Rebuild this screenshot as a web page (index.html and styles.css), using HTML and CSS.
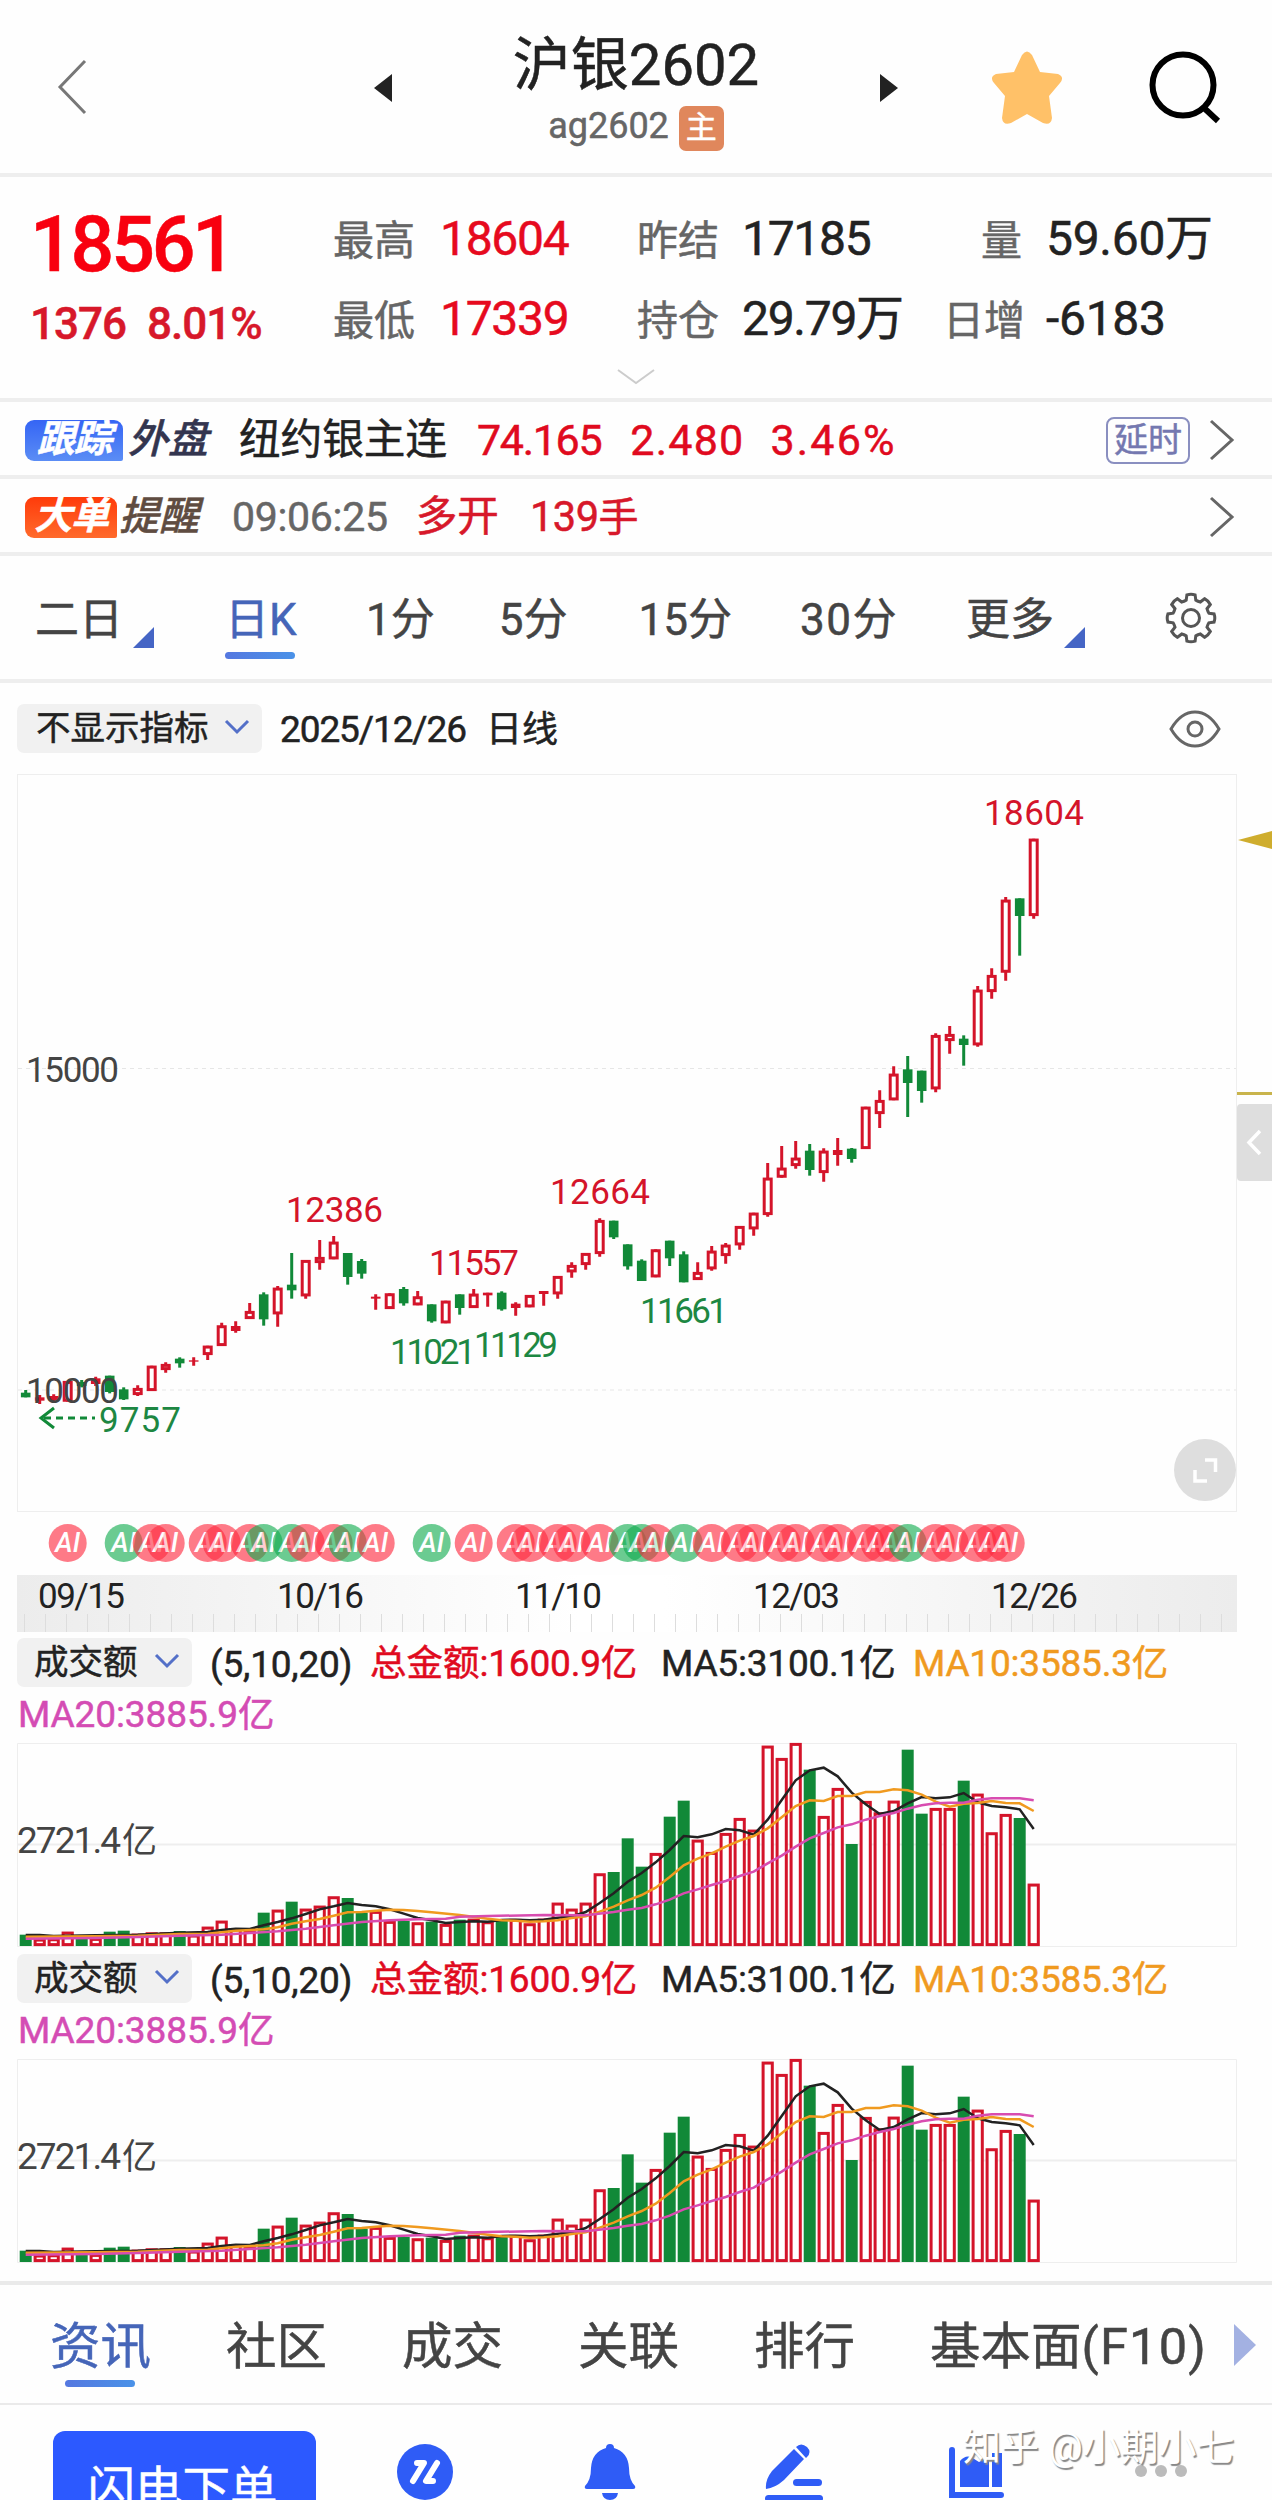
FILE: index.html
```html
<!DOCTYPE html>
<html lang="zh-CN">
<head>
    <meta charset="UTF-8">
    <title>沪银2602</title>
    <link rel="stylesheet" href="styles.css">
</head>
<body>
    <header class="topbar">
        <svg class="back" width="30" height="56" viewBox="0 0 30 56"><path d="M28 2 L3 28 L28 54"/></svg>
        <svg class="arrow prev" width="18" height="28" viewBox="0 0 18 28"><path d="M18 0 V28 L0 14 Z"/></svg>
        <div class="title">
            <h1>沪银2602</h1>
            <div class="code">ag2602<span class="main-tag">主</span></div>
        </div>
        <svg class="arrow next" width="18" height="28" viewBox="0 0 18 28"><path d="M0 0 V28 L18 14 Z"/></svg>
        <svg class="star" width="72" height="74" viewBox="0 0 72 74"><path d="M31 4 Q36 -3 41 4 L49 21 L67 23 Q74 26 69 32 L58 45 L61 67 Q60 75 52 72 L36 63 L20 72 Q12 75 11 67 L14 45 L3 32 Q-2 26 5 23 L23 21 Z"/></svg>
        <svg class="search" width="74" height="74" viewBox="0 0 74 74"><circle cx="34" cy="34" r="30.5"/><path d="M54 56 L69 70"/></svg>
    </header>

    <section class="quote">
        <div class="price">18561</div>
        <div class="label">最高</div><div class="value up">18604</div>
        <div class="label">昨结</div><div class="value">17185</div>
        <div class="label right">量</div><div class="value">59.60<span class="cn">万</span></div>
        <div class="change"><span>1376</span><span>8.01%</span></div>
        <div class="label">最低</div><div class="value up">17339</div>
        <div class="label">持仓</div><div class="value">29.79<span class="cn">万</span></div>
        <div class="label right">日增</div><div class="value">-6183</div>
        <svg class="more" width="38" height="16" viewBox="0 0 38 16"><path d="M1 1 L19 14 L37 1"/></svg>
    </section>

    <section class="strip">
        <span class="badge blue">跟踪</span><span class="badge-text dark">外盘</span>
        <span class="name">纽约银主连</span>
        <span class="nums"><b>74.165</b><b class="diff">2.480</b><b class="pct">3.46%</b></span>
        <span class="delay">延时</span>
        <svg class="go" width="26" height="42" viewBox="0 0 26 42"><path d="M2 2 L23 21 L2 40"/></svg>
    </section>
    <section class="strip second">
        <span class="badge orange">大单</span><span class="badge-text brown">提醒</span>
        <span class="time">09:06:25</span>
        <span class="deal">多开</span>
        <span class="deal hands">139<span class="cn">手</span></span>
        <svg class="go" width="26" height="42" viewBox="0 0 26 42"><path d="M2 2 L23 21 L2 40"/></svg>
    </section>

    <nav class="periods">
        <span class="period corner">二日</span>
        <span class="period active">日K</span>
        <span class="period p1">1分</span>
        <span class="period p5">5分</span>
        <span class="period p15">15分</span>
        <span class="period p30">30分</span>
        <span class="period corner pmore">更多</span>
        <svg class="gear" width="52" height="52" viewBox="-26 -26 52 52"><path id="gear"/><circle r="8.5"/></svg>
    </nav>

    <section class="chart-head">
        <span class="select wide">不显示指标<svg width="26" height="16" viewBox="0 0 26 16"><path d="M2 2 L13 13 L24 2"/></svg></span>
        <span class="date">2025/12/26</span><span class="kline">日线</span>
        <svg class="eye" width="52" height="38" viewBox="0 0 52 38"><path d="M2 19 Q12 2 26 2 T50 19 Q40 36 26 36 T2 19 Z"/><circle cx="26" cy="19" r="7"/></svg>
    </section>

    <svg class="kchart" width="1272" height="860" viewBox="0 774 1272 860">
        <defs>
            <linearGradient id="axis">
                <stop offset="0" stop-color="#ececec"/><stop offset=".46" stop-color="#fff"/>
                <stop offset=".53" stop-color="#fff"/><stop offset="1" stop-color="#ececec"/>
            </linearGradient>
        </defs>
        <rect class="frame" x="17.5" y="774.5" width="1219" height="737"/>
        <path class="grid" d="M18 1068.5 H1236 M18 1390 H1236"/>
        <g id="candles"></g>
        <g class="tag up">
            <text x="984" y="825" textLength="100">18604</text>
            <text x="286" y="1222" textLength="97">12386</text>
            <text x="550" y="1204" textLength="100">12664</text>
            <text x="429" y="1275" textLength="90">11557</text>
        </g>
        <g class="tag down">
            <text x="390" y="1363.5" textLength="86">11021</text>
            <text x="474" y="1357" textLength="84">11129</text>
            <text x="640" y="1323" textLength="88">11661</text>
            <text x="99" y="1432" textLength="82">9757</text>
        </g>
        <g class="tag scale">
            <text x="26" y="1082" textLength="93">15000</text>
            <text x="26" y="1403" textLength="93">10000</text>
        </g>
        <path class="low-arrow" d="M54 1408 L41 1418 L54 1428"/>
        <path class="low-arrow" stroke-dasharray="7 5" d="M44 1418 H95"/>
        <circle cx="1205" cy="1470" r="31" fill="#dedede"/>
        <path class="white-line" d="M1205 1460 H1215.500 V1472 M1195 1470 V1481 H1207"/>
        <path d="M1238 840 L1272 831 V849 Z" fill="#cfad2e"/>
        <rect x="1237" y="1092" width="35" height="3" fill="#c9b44c"/>
        <rect x="1237" y="1104" width="40" height="77" rx="4" fill="#dedede"/>
        <path class="white-line" d="M1260 1131 L1249 1142.500 L1260 1154"/>
        <g id="ai"></g>
        <rect x="17" y="1575" width="1220" height="57" fill="url(#axis)"/>
        <path id="ticks" class="ticks"/>
        <g class="dates">
            <text x="38" y="1608" textLength="87">09/15</text>
            <text x="277" y="1608" textLength="87">10/16</text>
            <text x="515" y="1608" textLength="87">11/10</text>
            <text x="753" y="1608" textLength="87">12/03</text>
            <text x="991" y="1608" textLength="87">12/26</text>
        </g>
    </svg>

    <section class="volume">
        <div class="vol-head">
            <span class="select">成交额<svg width="26" height="16" viewBox="0 0 26 16"><path d="M2 2 L13 13 L24 2"/></svg></span>
            <span class="args">(5,10,20)</span>
            <span class="total"><i>总金额</i>:1600.9<i>亿</i></span>
            <span class="ma5">MA5:3100.1<i>亿</i></span>
            <span class="ma10">MA10:3585.3<i>亿</i></span>
        </div>
        <div class="ma20">MA20:3885.9<i>亿</i></div>
        <svg class="vchart" width="1272" height="208" viewBox="0 -1 1272 208"></svg>
    </section>
    <section class="volume">
        <div class="vol-head">
            <span class="select">成交额<svg width="26" height="16" viewBox="0 0 26 16"><path d="M2 2 L13 13 L24 2"/></svg></span>
            <span class="args">(5,10,20)</span>
            <span class="total"><i>总金额</i>:1600.9<i>亿</i></span>
            <span class="ma5">MA5:3100.1<i>亿</i></span>
            <span class="ma10">MA10:3585.3<i>亿</i></span>
        </div>
        <div class="ma20">MA20:3885.9<i>亿</i></div>
        <svg class="vchart" width="1272" height="208" viewBox="0 -1 1272 208"></svg>
    </section>

    <nav class="tabs">
        <span class="tab active">资讯</span>
        <span class="tab">社区</span>
        <span class="tab">成交</span>
        <span class="tab">关联</span>
        <span class="tab">排行</span>
        <span class="tab">基本面<span class="f10">(F10)</span></span>
        <svg class="tab-more" width="22" height="42" viewBox="0 0 22 42"><path d="M0 0 L22 21 L0 42 Z"/></svg>
    </nav>

    <footer class="bottombar">
        <div class="order">闪电下单</div>
        <svg class="icon i1" width="56" height="56" viewBox="0 0 56 56"><circle cx="28" cy="28" r="28"/><path class="cut" d="M20 19 H27 L16 37 M40 19 L29 37 H36"/></svg>
        <svg class="icon i2" width="52" height="60" viewBox="0 0 52 60"><path d="M26 0 Q30 0 30 4 Q44 8 45 24 Q45 36 51 42 Q52 45 49 45 H3 Q0 45 1 42 Q7 36 7 24 Q8 8 22 4 Q22 0 26 0 Z M18 49 H34 Q33 56 26 56 Q19 56 18 49 Z"/></svg>
        <svg class="icon i3" width="58" height="60" viewBox="0 0 58 60"><path d="M1 45 Q0 36 7 27 L29 5 L39 15 L19 36 Q10 44 1 45 Z M31 3 Q36 -2 42 3 Q47 8 42 13 L41 14 Z"/><rect x="28" y="35" width="29" height="7" rx="3.500"/><rect x="0" y="51" width="58" height="7" rx="3.500"/></svg>
        <svg class="icon i4" width="56" height="54" viewBox="0 0 56 54"><path d="M3 3 V48 H52" class="line"/><path d="M11 14 Q16 8 22 10 L30 15 L40 10 V40 H11 Z M43 6 H53 V40 H43 Z"/></svg>
        <svg class="dots" width="52" height="12" viewBox="0 0 52 12"><circle cx="6" cy="6" r="6"/><circle cx="26" cy="6" r="6"/><circle cx="46" cy="6" r="6"/></svg>
        <div class="watermark">知乎 @小期小七</div>
    </footer>

    <script src="chart.js"></script>
</body>
</html>
```
FILE: chart.js
```js
const STEP = 14;
const X0 = 25.7;
const RED = "#d4142a";
const GREEN = "#118938";
const cx = i => X0 + i * STEP;

// [base, rows], row: up/down, wick top, body top, body bottom, wick bottom
const periods = [
    [3540, [
        "g 630 638 652 652", "r 645 652 662 672", "r 643 648 660 664", "r 603 603 665 665",
        "g 600 606 618 622", "r 590 595 612 618", "g 587 587 636 640", "g 622 628 658 660",
        "r 616 624 645 648", "r 557 557 633 633", "r 547 552 570 578", "g 532 536 550 563",
        "r 532 541 545 557", "r 497 497 525 540", "r 428 436 498 498", "r 424 438 453 458",
        "r 369 393 417 417", "g 337 343 418 437", "r 318 323 403 440", "g 219 314 331 356",
        "r 240 240 349 356", "r 180 231 249 269", "r 168 185 238 238", "g 219 219 291 314",
        "g 237 243 281 296", "r 343 350 356 389", "r 340 340 387 387", "g 321 327 370 377",
        "r 333 349 376 376", "g 373 373 424 428", "r 362 362 430 430", "g 343 343 384 404",
        "r 327 341 384 384", "r 338 338 346 380", "g 334 338 388 392", "r 367 371 384 407",
        "r 345 345 382 382", "r 333 333 342 377", "r 288 288 343 356", "r 247 255 277 293",
        "r 219 219 255 269", "r 115 120 222 230", "g 122 122 172 177", "g 193 193 259 269"
    ]],
    [3120, [
        "g 658 662 723 723", "r 628 628 712 712", "g 602 602 655 678", "g 634 643 727 727",
        "r 667 696 720 720", "r 618 632 688 692", "r 609 614 648 671", "r 558 558 616 629",
        "r 518 518 568 587", "r 369 413 525 530", "r 318 383 413 413", "r 303 353 378 386",
        "g 312 332 390 407", "r 325 332 399 425", "r 294 330 345 377", "g 324 326 357 368",
        "r 200 200 327 327", "r 151 180 222 264", "r 79 101 181 181", "g 48 88 129 231",
        "g 92 92 153 188"
    ]],
    [2280, [
        "r 820 825 988 997", "r 798 822 843 881", "g 826 836 855 917", "r 678 689 856 860",
        "r 625 645 696 716", "r 411 419 638 662", "g 415 415 468 587", "r 236 236 468 476"
    ]]
];

const colors = [];
let out = "";
periods.forEach(([base, rows]) => rows.forEach(row => {
    const [color, ...v] = row.split(" ");
    const [wt, bt, bb, wb] = v.map(n => (base + Number(n)) / 3);
    const x = cx(colors.length);
    const h = bb - bt;
    colors.push(color);
    if (color === "g") {
        out += `<path stroke="${GREEN}" stroke-width="3" d="M${x} ${wt} V${wb}"/>`;
        out += `<rect x="${x - 4.8}" y="${bt}" width="9.6" height="${h}" fill="${GREEN}"/>`;
    } else {
        out += `<path stroke="${RED}" stroke-width="3" d="M${x} ${wt} V${bt + 1} M${x} ${bb - 1} V${wb}"/>`;
        if (h < 6) {
            out += `<rect x="${x - 4.8}" y="${bt}" width="9.6" height="${h}" fill="${RED}"/>`;
        } else {
            out += `<rect x="${x - 3.5}" y="${bt + 1.4}" width="7" height="${h - 2.8}" fill="#fff" stroke="${RED}" stroke-width="3"/>`;
        }
    }
}));
document.getElementById("candles").innerHTML = out;

const signals = "3 7g 9 10 13 14 16 17g 19g 20 22 23g 25 29g 32 35 36 38 39 41 43g 44g 45 47g 49 51 52 54 55 57 58 60 61 62 63g 65 66 68 69 70";
document.getElementById("ai").innerHTML = signals.split(" ").map(s => {
    const x = cx(parseInt(s));
    const fill = s.endsWith("g") ? "#12ac50" : "#ff2a3f";
    return `<g class="ai"><circle cx="${x}" cy="1543" r="19" fill="${fill}"/><text x="${x}" y="1552">AI</text></g>`;
}).join("");

let d = "";
for (let x = 24.5; x < 1237; x += 21) d += `M${x} 1614 V1632 `;
document.getElementById("ticks").setAttribute("d", d);

// turnover bars and averages
const tops = [616, 628, 627, 607, 625, 626, 607, 604, 613, 609, 609, 605, 616, 592, 574, 597, 603, 550, 541, 517,
    538, 529, 501, 506, 550, 545, 575, 575, 579, 577, 584, 571, 568, 576, 574, 569, 582, 568, 520, 538,
    520, 432, 428, 327, 412, 371, 262, 214, 331, 368, 311, 266, 301, 49, 86, 41, 121, 260, 176, 344,
    215, 249, 214, 61, 253, 236, 236, 154, 193, 309, 254, 266, 463];
const averages = [
    ["#222", "0 617 1 617 2 620 5 618 8 616 11 610 13 608 14 602 15 598 16 599 17 588 18 578 19 567 20 554 21 540 22 531 23 521 24 527 25 531 26 540 27 553 28 566 29 573 30 581 31 578 32 576 33 577 34 572 35 571 36 573 37 571 38 565 39 561 40 548 41 521 42 492 43 457 44 431 45 399 46 362 47 320 48 324 49 315 50 299 51 303 52 316 53 271 54 212 55 153 56 123 57 115 58 141 59 190 60 225 61 254 62 245 63 222 64 203 65 207 66 204 67 191 68 219 69 230 70 234 71 240 72 299"],
    ["#f09a1f", "0 622 5 621 8 619 11 614 13 613 15 604 17 600 18 594 19 583 20 576 21 569 22 559 23 549 24 548 25 544 26 541 27 542 28 545 29 549 31 557 33 568 34 573 35 574 36 577 37 576 38 573 39 566 40 561 41 547 42 532 43 513 44 497 45 475 46 443 47 408 48 388 49 372 50 352 51 334 52 320 53 297 54 264 55 230 56 213 57 215 58 200 59 200 60 188 61 188 62 180 63 183 64 196 65 217 66 232 67 223 68 221 69 215 70 221 71 222 72 245"],
    ["#d84cb0", "0 628 5 626 8 623 11 619 14 616 16 611 18 606 20 598 22 588 24 578 26 573 28 570 30 568 31 562 33 560 37 557 40 558 42 548 43 541 44 536 45 525 46 511 47 492 48 480 49 467 50 455 51 440 52 427 53 402 54 379 55 352 56 327 57 311 58 294 59 285 60 271 61 260 62 251 63 238 64 228 65 222 66 220 67 220 68 211 69 207 70 207 71 207 72 213"]
];
const vy = v => (v - 41) / 3;

let vol = '<path class="frame" d="M17.5 0.5 H1236.5 V203.5 H17.5 Z"/><path class="mid" d="M18 101.500 H1236"/>';
tops.forEach((v, i) => {
    const x = cx(i);
    const y = vy(v);
    vol += colors[i] === "g"
        ? `<rect x="${x - 6}" y="${y}" width="12" height="${203 - y}" fill="${GREEN}"/>`
        : `<rect x="${x - 4.6}" y="${y + 1.4}" width="9.2" height="${200.2 - y}" fill="#fff" stroke="${RED}" stroke-width="3"/>`;
});
averages.forEach(([color, list]) => {
    const n = list.split(" ").map(Number);
    let points = "";
    for (let i = 0; i < n.length; i += 2) points += `${cx(n[i])},${vy(n[i + 1])} `;
    vol += `<polyline points="${points}" fill="none" stroke="${color}" stroke-width="2.5"/>`;
});
vol += '<text class="amount" x="17" y="110" textLength="104">2721.4</text><text class="yi" x="122" y="110">亿</text>';
document.querySelectorAll(".vchart").forEach(svg => svg.innerHTML = vol);

// gear outline
let g = "";
for (let i = 0; i < 8; i++) {
    const at = (r, a) => {
        const t = (i * 45 + a) * Math.PI / 180;
        return `${(r * Math.cos(t)).toFixed(1)} ${(r * Math.sin(t)).toFixed(1)}`;
    };
    g += `${i ? "L" : "M"}${at(18.5, -15)} L${at(23.5, -10)} Q${at(24.5, 0)} ${at(23.5, 10)} L${at(18.5, 15)} Q${at(18, 22.5)} ${at(18.5, 30)} `;
}
document.getElementById("gear").setAttribute("d", g + "Z");
```
FILE: styles.css
```css
* {
    box-sizing: border-box;
}

body {
    margin: 0;
    width: 1272px;
    height: 2500px;
    overflow: hidden;
    background-color: #fefefe;
    color: #222;
    font-family: Roboto, "Noto Sans CJK SC", sans-serif;
    line-height: 1;
    -webkit-text-stroke: .5px;
}

svg {
    display: block;
    flex: none;
}

i {
    font-style: normal;
}

.up {
    color: #e60a1e;
}

/* top bar */
.topbar {
    display: flex;
    align-items: center;
    height: 177px;
    border-bottom: 4px solid #eee;
}

.back {
    margin-left: 57px;
    fill: none;
    stroke: #777;
    stroke-width: 3;
}

.arrow {
    margin-top: 3px;
    fill: #222;
}

.prev {
    margin-left: 287px;
}

.title {
    width: 488px;
    padding-top: 4px;
    text-align: center;
}

.title h1 {
    margin: 4px 0 0;
    font-size: 58px;
    font-weight: 400;
    line-height: 68px;
    white-space: nowrap;
}

.code {
    display: flex;
    justify-content: center;
    align-items: center;
    gap: 10px;
    height: 46px;
    margin-top: 5px;
    padding-bottom: 3px;
    font-size: 36px;
    color: #666;
}

.main-tag {
    width: 45px;
    height: 45px;
    margin-top: 5px;
    border-radius: 7px;
    background-color: #e0875c;
    color: #fff;
    font-size: 31px;
    line-height: 44px;
}

.star {
    margin: 3px 0 0 93px;
    fill: #ffc168;
}

.search {
    margin: 3px 0 0 86px;
    fill: none;
    stroke: #000;
    stroke-width: 6;
}

/* quote */
.quote {
    display: grid;
    grid-template-columns: 303px 107px 197px 105px 201px 79px 1fr;
    grid-template-rows: 80px 80px 36px;
    align-items: center;
    align-content: start;
    height: 225px;
    padding: 22px 0 0 30px;
    border-bottom: 4px solid #eee;
    white-space: nowrap;
}

.price {
    padding-top: 12px;
    font-size: 77px;
    font-weight: 500;
    letter-spacing: -3.2px;
    color: #f8000f;
}

.change {
    display: flex;
    gap: 21px;
    padding-top: 9px;
    font-size: 44px;
    font-weight: 500;
    letter-spacing: -1px;
    color: #d7182a;
}

.label {
    padding-top: 4px;
    font-size: 41px;
    color: #666;
}

.right {
    text-align: right;
}

.value {
    font-size: 48px;
    letter-spacing: -1.3px;
}

.quote .right + .value {
    padding-left: 24px;
    letter-spacing: -.3px;
}

.value .cn {
    font-size: 48px;
    letter-spacing: 0;
}

.more {
    grid-column: 1 / -1;
    margin-left: 587px;
    fill: none;
    stroke: #ccc;
    stroke-width: 2;
}

/* strips */
.strip {
    display: flex;
    align-items: center;
    height: 77px;
    padding: 3px 37px 0 25px;
    border-bottom: 4px solid #eee;
    font-size: 41.6px;
    white-space: nowrap;
}

.badge {
    width: 98px;
    height: 41px;
    border-radius: 9px 9px 2px 9px;
    color: #fff;
    font-size: 38px;
    font-weight: 700;
    font-style: italic;
    line-height: 39px;
    text-align: center;
    letter-spacing: -1px;
}

.blue {
    background: linear-gradient(#3565f5, #5b8df5);
}

.orange {
    width: 92px;
    background: linear-gradient(#ff3b0a, #ff6a2c);
}

.badge-text {
    width: 82px;
    margin-left: 5px;
    font-size: 40px;
    font-weight: 500;
    font-style: italic;
    color: #33354f;
}

.brown {
    margin-left: 2px;
    color: #5f4c41;
}

.name {
    margin-left: 29px;
}

.nums {
    display: flex;
    gap: 29px;
    margin-left: 30px;
    font-size: 43px;
    letter-spacing: -1.3px;
    color: #e00a1e;
}

.nums b {
    font-weight: 400;
}

.nums .diff {
    letter-spacing: 1.2px;
}

.nums .pct {
    margin-left: -3px;
    letter-spacing: 2.2px;
}

.delay {
    width: 84px;
    height: 47px;
    margin-left: auto;
    border: 2px solid #8a8fc0;
    border-radius: 8px;
    color: #7478b0;
    font-size: 34px;
    line-height: 43px;
    text-align: center;
}

.go {
    margin-left: auto;
    fill: none;
    stroke: #666;
    stroke-width: 3;
}

.delay + .go {
    margin-left: 19px;
}

.time {
    margin-left: 31px;
    font-size: 41px;
    letter-spacing: -.3px;
    color: #666;
}

.deal {
    margin-left: 28px;
    color: #d7182a;
}

.hands {
    margin-left: 31px;
    letter-spacing: -.5px;
}

.hands .cn {
    font-size: 40px;
}

/* periods */
.periods {
    display: flex;
    align-items: center;
    height: 127px;
    padding: 4px 0 0 35px;
    border-bottom: 4px solid #eee;
    font-size: 44px;
    color: #444;
    white-space: nowrap;
}

.corner {
    position: relative;
}

.corner::after {
    content: "";
    position: absolute;
    left: 98px;
    bottom: -6px;
    border-left: 21px solid transparent;
    border-bottom: 21px solid #4565c5;
}

.periods .active {
    position: relative;
    width: 70px;
    margin-left: 102px;
    color: #4565b8;
}

.active::after {
    content: "";
    position: absolute;
    left: 0;
    bottom: -17px;
    width: 70px;
    height: 7px;
    border-radius: 4px;
    background: linear-gradient(90deg, #5578e0, #4a92e8);
}

.p1 { margin-left: 71px; }
.p5 { margin-left: 64px; }
.p15 { margin-left: 71px; }
.p30 { margin-left: 68px; letter-spacing: 1.5px; }
.pmore { margin-left: 68px; }

.gear {
    margin: -4px 55px 0 auto;
    fill: none;
    stroke: #555;
    stroke-width: 3;
}

/* chart */
.chart-head {
    display: flex;
    align-items: center;
    height: 91px;
    padding: 0 51px 0 17px;
    font-size: 36px;
}

.select {
    display: flex;
    align-items: center;
    width: 175px;
    height: 49px;
    padding: 0 12px 0 17px;
    justify-content: space-between;
    border-radius: 7px;
    background-color: #f1f1f1;
    font-size: 34.5px;
    letter-spacing: 0;
}

.wide {
    width: 245px;
    padding-left: 19px;
}

.select svg {
    margin-top: -3px;
    fill: none;
    stroke: #5470c8;
    stroke-width: 3;
}

.date {
    margin: 2px 0 0 18px;
    font-size: 37px;
    letter-spacing: -1.1px;
}

.kline {
    margin: 3px 0 0 20px;
}

.eye {
    margin-left: auto;
    fill: none;
    stroke: #666;
    stroke-width: 3;
}

.frame {
    fill: none;
    stroke: #eee;
}

.grid {
    stroke: #e6e6e6;
    stroke-dasharray: 4 4;
}

.tag {
    font-size: 35px;
}

.tag.up {
    fill: #d4142a;
}

.tag.down {
    fill: #1d8742;
}

.scale,
.amount,
.yi {
    fill: #444;
}

.low-arrow {
    fill: none;
    stroke: #118938;
    stroke-width: 3;
}

.white-line {
    fill: none;
    stroke: #fff;
    stroke-width: 3.5;
}

.ai {
    opacity: .62;
}

.ai text {
    fill: #fff;
    font-size: 27px;
    font-weight: 500;
    font-style: italic;
    text-anchor: middle;
}

.ticks {
    stroke: #ddd;
}

.dates {
    fill: #222;
    font-size: 35px;
}

/* turnover */
.volume {
    height: 316px;
    padding-top: 4px;
}

.vol-head {
    display: flex;
    align-items: center;
    height: 49px;
    padding-left: 17px;
    font-size: 37px;
    letter-spacing: -.2px;
    white-space: nowrap;
}

.vol-head > span:not(.select) {
    padding-top: 3px;
}

.vol-head i,
.ma20 i {
    font-size: 36.5px;
    letter-spacing: 0;
}

.args {
    width: 160px;
    margin-left: 18px;
}

.total {
    width: 291px;
    color: #e00a1e;
}

.ma5 {
    width: 252px;
}

.ma10 {
    color: #f09a1f;
}

.ma20 {
    height: 55px;
    padding: 9px 0 0 18px;
    font-size: 37px;
    letter-spacing: -.1px;
    color: #d44cb4;
}

.mid {
    stroke: #eee;
    stroke-width: 2;
}

.amount {
    font-size: 37px;
}

.yi {
    font-size: 35px;
}

/* bottom */
.tabs {
    display: flex;
    align-items: center;
    gap: 75px;
    height: 124px;
    margin-top: 15px;
    padding: 7px 0 0 50px;
    border-top: 4px solid #eaeaea;
    border-bottom: 2px solid #eaeaea;
    font-size: 50.5px;
    color: #444;
    white-space: nowrap;
}

.f10 {
    letter-spacing: 1.2px;
}

.tabs .active {
    position: relative;
    color: #4565b8;
}

.tabs .active::after {
    left: 15px;
    bottom: -14px;
}

.tab-more {
    margin: -5px 0 0 -48px;
    fill: #a3b1e2;
}

.bottombar {
    position: relative;
    display: flex;
    align-items: flex-start;
    height: 96px;
    padding: 26px 0 0 53px;
}

.order {
    width: 263px;
    height: 100px;
    padding: 36px 4px 0 0;
    border-radius: 12px;
    background-color: #2c59ff;
    color: #fff;
    font-size: 47.5px;
    font-weight: 400;
    text-align: center;
}

.icon {
    margin-top: 13px;
    fill: #2f5cf6;
}

.i1 { margin-left: 81px; }
.i2 { margin-left: 131px; }
.i3 { margin-left: 129px; }
.i4 { margin: 16px 0 0 126px; }

.cut {
    fill: none;
    stroke: #fff;
    stroke-width: 6;
    stroke-linecap: round;
    stroke-linejoin: round;
}

.line {
    fill: none;
    stroke: #2f5cf6;
    stroke-width: 6;
    stroke-linecap: round;
}

.dots {
    margin: 34px 0 0 130px;
    fill: #bbb;
}

.watermark {
    position: absolute;
    left: 963px;
    top: 23px;
    font-size: 38px;
    color: #fff;
    text-shadow: 1.5px 1.5px 1px #888;
    white-space: nowrap;
    -webkit-text-stroke: 0;
}
```
